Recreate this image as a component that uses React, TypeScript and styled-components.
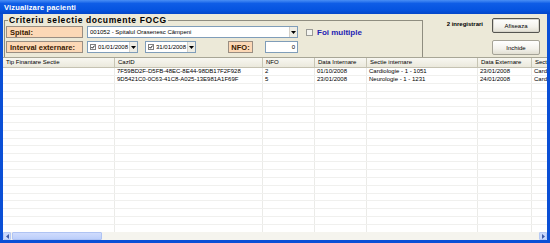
import React from 'react';
import styled, { createGlobalStyle } from 'styled-components';

const GlobalStyle = createGlobalStyle`
  html, body {
    margin: 0;
    padding: 0;
    width: 550px;
    height: 243px;
    overflow: hidden;
  }
  body {
    font-family: "Liberation Sans", Arial, sans-serif;
  }
  * {
    box-sizing: border-box;
  }
`;

const COLS = '112px 148px 52px 52px 111px 54px 40px';

const Window = styled.div`
  width: 550px;
  height: 243px;
  display: flex;
  flex-direction: column;
  background: #0a4fd6;
`;

const TitleBar = styled.div`
  height: 14px;
  flex: none;
  display: flex;
  align-items: center;
  padding-left: 4px;
  color: #fff;
  font-weight: bold;
  font-size: 7.5px;
  letter-spacing: 0.15px;
  background: linear-gradient(180deg, #4a8ff5 0%, #0f5de6 25%, #0654e0 70%, #0446c8 100%);
`;

const Body = styled.div`
  flex: 1;
  min-height: 0;
  margin: 0 3px 3px;
  background: #ece9d8;
  display: flex;
  flex-direction: column;
`;

const Top = styled.div`
  height: 43px;
  flex: none;
  display: flex;
`;

const Group = styled.fieldset`
  margin: 1px 0 0 1px;
  width: 419px;
  height: 42px;
  padding: 1px 0 0 1px;
  border: 1px solid #8f8d80;
  border-bottom: none;
  display: flex;
  flex-direction: column;
  gap: 3px;
`;

const Legend = styled.legend`
  margin-left: 2px;
  padding: 0 1px;
  font-weight: bold;
  font-size: 8.5px;
  letter-spacing: 0.6px;
  line-height: 10px;
  color: #000;
`;

const FieldRow = styled.div`
  display: flex;
  align-items: center;
  height: 12px;
`;

const Label = styled.div<{ $w: number; $center?: boolean; $ml?: number }>`
  width: ${p => p.$w}px;
  margin-left: ${p => p.$ml ?? 0}px;
  height: 12px;
  flex: none;
  display: flex;
  align-items: center;
  justify-content: ${p => (p.$center ? 'center' : 'flex-start')};
  padding-left: ${p => (p.$center ? 0 : 3)}px;
  background: #fcd8b6;
  border: 1px solid #9a8e82;
  font-weight: bold;
  font-size: 7.5px;
  color: #3a1a00;
`;

const Field = styled.div<{ $w: number; $ml: number }>`
  width: ${p => p.$w}px;
  margin-left: ${p => p.$ml}px;
  height: 12px;
  flex: none;
  display: flex;
  align-items: center;
  background: #fff;
  border: 1px solid #7f9db9;
  font-size: 6px;
  color: #000;
  padding-left: 2px;
`;

const FieldText = styled.span<{ $right?: boolean }>`
  flex: 1;
  white-space: nowrap;
  overflow: hidden;
  text-align: ${p => (p.$right ? 'right' : 'left')};
  padding-right: ${p => (p.$right ? 2 : 0)}px;
`;

const DropBtn = styled.div`
  width: 8px;
  height: 10px;
  flex: none;
  display: flex;
  align-items: center;
  justify-content: center;
  background: #eeede5;
  border-left: 1px solid #d4d0c8;
`;

const MiniCheck = styled.div`
  width: 6px;
  height: 6px;
  flex: none;
  margin-right: 2px;
  border: 1px solid #808080;
  background: #fff;
  display: flex;
  align-items: center;
  justify-content: center;
`;

const CheckBox = styled.div`
  width: 7px;
  height: 7px;
  margin-left: 8px;
  flex: none;
  border: 1px solid #9a9a96;
  background: #f4f4f0;
`;

const CheckLabel = styled.span`
  margin-left: 4px;
  font-weight: bold;
  font-size: 8px;
  color: #1e23b4;
`;

const RightPanel = styled.div`
  flex: 1;
  display: grid;
  grid-template-columns: 1fr 48px;
  grid-template-rows: 15px 15px;
  column-gap: 9px;
  row-gap: 7px;
  padding: 4px 7px 0 0;
`;

const Count = styled.div`
  text-align: right;
  padding-top: 3px;
  font-weight: bold;
  font-size: 6px;
  color: #000;
`;

const Button = styled.button<{ $default?: boolean }>`
  grid-column: 2;
  margin: 0;
  padding: 0;
  width: 48px;
  height: 15px;
  font-family: inherit;
  font-size: 6px;
  color: #000;
  background: linear-gradient(180deg, #ffffff 0%, #f3f2ec 60%, #e2dfd2 100%);
  border: 1px solid ${p => (p.$default ? '#555550' : '#a5a397')};
  box-shadow: ${p => (p.$default ? 'inset 0 0 0 1px #d8d6cc' : 'none')};
  border-radius: 2px;
`;

const Grid = styled.div`
  flex: 1;
  min-height: 0;
  overflow: hidden;
  background: #fff;
  border-top: 1px solid #a8a696;
`;

const HeadRow = styled.div`
  display: grid;
  grid-template-columns: ${COLS};
  height: 10px;
  background: linear-gradient(180deg, #f8f7f2 0%, #ebe9dc 100%);
  border-bottom: 1px solid #c5c2b2;
`;

const HeadCell = styled.div`
  font-size: 6px;
  line-height: 9px;
  padding-left: 3px;
  color: #000;
  white-space: nowrap;
  overflow: hidden;
  border-right: 1px solid #c7c5b4;
`;

const Row = styled.div`
  display: grid;
  grid-template-columns: ${COLS};
  height: 7.85px;
  border-bottom: 1px solid #f0f0ee;
`;

const Cell = styled.div`
  font-size: 6px;
  line-height: 7px;
  padding-left: 2px;
  color: #000;
  white-space: nowrap;
  overflow: hidden;
  border-right: 1px solid #ebebe8;
`;

const ScrollBar = styled.div`
  height: 8px;
  flex: none;
  display: flex;
  background: #f5f4ee;
`;

const ScrollBtn = styled.div`
  width: 8px;
  height: 8px;
  flex: none;
  display: flex;
  align-items: center;
  justify-content: center;
  background: #c9d8fc;
  border: 1px solid #b6c9f4;
  border-radius: 1px;
`;

const Track = styled.div`
  flex: 1;
  display: flex;
  align-items: stretch;
`;

const Thumb = styled.div`
  width: 90px;
  margin-left: 1px;
  background: linear-gradient(180deg, #d0dcfd 0%, #bccffb 100%);
  border: 1px solid #afc3f3;
  border-radius: 1px;
`;

const Arrow = ({ dir = 'down' }: { dir?: 'down' | 'left' | 'right' }) => {
  const pts = dir === 'down' ? '0,0 5,0 2.5,3' : dir === 'left' ? '3,0 3,5 0,2.5' : '0,0 0,5 3,2.5';
  const w = dir === 'down' ? 5 : 3;
  const h = dir === 'down' ? 3 : 5;
  return (
    <svg width={w} height={h} viewBox={`0 0 ${w} ${h}`}>
      <polygon points={pts} fill={dir === 'down' ? '#000' : '#3d5aa8'} />
    </svg>
  );
};

const Tick = () => (
  <svg width="4" height="4" viewBox="0 0 4 4">
    <polyline points="0.4,2 1.5,3.2 3.6,0.6" fill="none" stroke="#000" strokeWidth="0.9" />
  </svg>
);

const headers = [
  'Tip Finantare Sectie',
  'CazID',
  'NFO',
  'Data Internare',
  'Sectie internare',
  'Data Externare',
  'Sectie externare',
];

const rows = [
  ['', '7F59BD2F-D5FB-48EC-8E44-98DB17F2F928', '2', '01/10/2008', 'Cardiologie - 1 - 1051', '23/01/2008', 'Cardiologie'],
  ['', '9D5421C0-0C63-41C8-A025-13E981A1F69F', '5', '23/01/2008', 'Neurologie  - 1 - 1231', '24/01/2008', 'Cardiologie'],
];

const EMPTY_ROWS = 20;

const DateField = ({ value, ml }: { value: string; ml: number }) => (
  <Field $w={51} $ml={ml}>
    <MiniCheck>
      <Tick />
    </MiniCheck>
    <FieldText>{value}</FieldText>
    <DropBtn>
      <Arrow />
    </DropBtn>
  </Field>
);

export default function App() {
  return (
    <Window>
      <GlobalStyle />
      <TitleBar>Vizualizare pacienti</TitleBar>
      <Body>
        <Top>
          <Group>
            <Legend>Criteriu selectie documente FOCG</Legend>
            <FieldRow>
              <Label $w={77}>Spital:</Label>
              <Field $w={211} $ml={4}>
                <FieldText>001052 - Spitalul Orasenesc Câmpeni</FieldText>
                <DropBtn>
                  <Arrow />
                </DropBtn>
              </Field>
              <CheckBox />
              <CheckLabel>Foi multiple</CheckLabel>
            </FieldRow>
            <FieldRow>
              <Label $w={77}>Interval externare:</Label>
              <DateField value="01/01/2008" ml={4} />
              <DateField value="31/01/2008" ml={7} />
              <Label $w={25} $center $ml={32}>NFO:</Label>
              <Field $w={33} $ml={12}>
                <FieldText $right>0</FieldText>
              </Field>
            </FieldRow>
          </Group>
          <RightPanel>
            <Count>2 inregistrari</Count>
            <Button $default>Afiseaza</Button>
            <Button>Inchide</Button>
          </RightPanel>
        </Top>
        <Grid>
          <HeadRow>
            {headers.map(h => (
              <HeadCell key={h}>{h}</HeadCell>
            ))}
          </HeadRow>
          {rows.map((r, i) => (
            <Row key={i}>
              {r.map((c, j) => (
                <Cell key={j}>{c}</Cell>
              ))}
            </Row>
          ))}
          {Array.from({ length: EMPTY_ROWS }).map((_, i) => (
            <Row key={'e' + i}>
              {headers.map(h => (
                <Cell key={h} />
              ))}
            </Row>
          ))}
        </Grid>
        <ScrollBar>
          <ScrollBtn>
            <Arrow dir="left" />
          </ScrollBtn>
          <Track>
            <Thumb />
          </Track>
          <ScrollBtn>
            <Arrow dir="right" />
          </ScrollBtn>
        </ScrollBar>
      </Body>
    </Window>
  );
}
